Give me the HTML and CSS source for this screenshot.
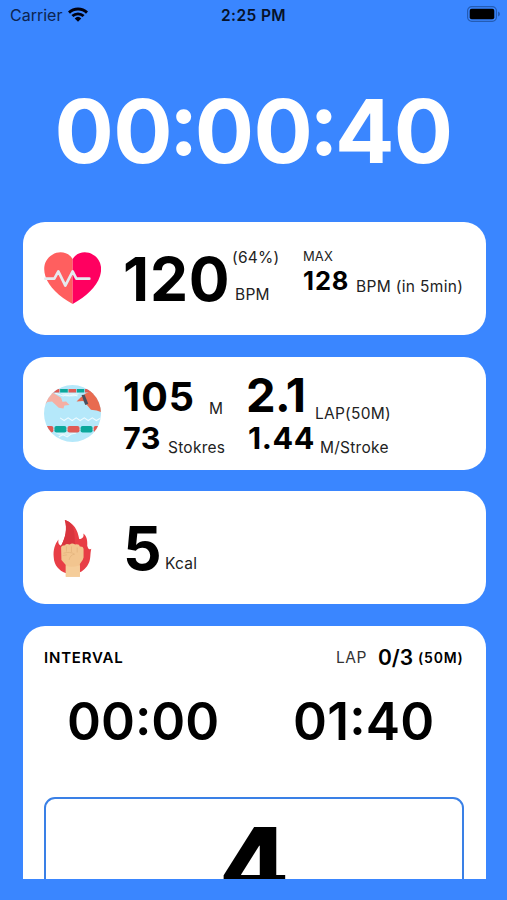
FILE: index.html
```html
<!DOCTYPE html>
<html lang="en">
<head>
<meta charset="utf-8">
<title>Workout</title>
<link rel="stylesheet" href="styles.css">
</head>
<body>
<header class="status">
  <div class="carrier">Carrier
    <svg class="wifi" viewBox="0 0 20 15"><path d="M0 4.6A14.3 14.3 0 0 1 20 4.6L18 6.7A11.4 11.4 0 0 0 2 6.7ZM3.4 8.1A9.6 9.6 0 0 1 16.6 8.1L14.6 10.1A6.7 6.7 0 0 0 5.4 10.1ZM6.7 11.4A4.8 4.8 0 0 1 13.3 11.4L10 14.8Z"/></svg>
  </div>
  <div class="clock">2:25 PM</div>
  <svg class="battery" viewBox="0 0 33 16"><rect x=".6" y=".6" width="28.8" height="14.8" rx="4.2" fill="none" stroke="#245cb4" stroke-width="1.2"/><rect x="2.7" y="2.7" width="24.6" height="10.6" rx="2"/><path d="M31 5.5Q33 6.2 33 8T31 10.5Z" fill="#245cb4"/></svg>
</header>
<h1 class="timer">00<i>:</i>00<i>:</i>40</h1>
<main class="cards">
  <section class="card heart">
    <svg class="icon" viewBox="87 105 171 171">
      <path d="M173 132C161 112 134 106 112 119C89 132 83 158 91 183C102 217 132 244 173 267Z" fill="#ff5f5f"/>
      <path d="M173 132C185 112 212 106 234 119C257 132 263 158 255 183C244 217 214 244 173 267Z" fill="#ff0060"/>
      <path d="M91 191H118L130 169L151 212L173 169L184 191H223" fill="none" stroke="#e6eaee" stroke-width="8" stroke-linecap="round" stroke-linejoin="round"/>
    </svg>
    <div class="rate">120</div>
    <div class="rate-side"><span class="small">(64%)</span><span class="small unit">BPM</span></div>
    <div class="max">
      <span class="max-label">MAX</span>
      <div class="max-row"><b>128</b><span class="small">BPM (in 5min)</span></div>
    </div>
  </section>
  <section class="card swim">
    <svg class="icon" viewBox="88 104 170 170">
      <defs><clipPath id="pool"><circle cx="173" cy="189" r="85"/></clipPath></defs>
      <g clip-path="url(#pool)">
        <path d="M88 104H258V274H88Z" fill="#b5e8fa"/>
        <path d="M137 128Q151 144 164 136Q179 144 195 128ZM118 245L140 257Q149 251 160 256Q171 245 186 245Z" fill="#d5f3fc"/>
        <path d="M121 128L145 137L153 134L164 137L176 133L188 137M136 202L148 210L160 202L172 210L184 202L196 210L208 202L220 210L232 202L244 210L258 202M132 259L144 252L157 259L170 250L184 247" fill="none" stroke="#f0fbff" stroke-width="3"/>
        <path d="M88 116H134V126H88ZM161 116H184V126H161ZM210 116H258V126H210Z" fill="#df5b55"/>
        <path d="M136 116H159V126H136ZM186 116H208V126H186Z" fill="#0ba79b"/>
        <path d="M88 158L96 139L113 126L139 142L143 154L154 153L164 164L149 165L146 174L132 172L112 153L98 155L87 168Z" fill="#f5afa3"/>
        <path d="M185 153L197 141L211 130L228 122L270 126V188L245 180L228 178L218 166L205 152Z" fill="#e86b50"/>
        <path d="M200 134L209 133L220 160L211 164Z" fill="#47505f"/>
        <path d="M88 236H258" stroke="#fff" stroke-width="3"/>
        <rect x="80" y="226" width="36" height="20" rx="6" fill="#df5b55"/>
        <rect x="119" y="226" width="36" height="20" rx="6" fill="#0ba79b"/>
        <rect x="158" y="226" width="36" height="20" rx="6" fill="#df5b55"/>
        <rect x="197" y="226" width="36" height="20" rx="6" fill="#0ba79b"/>
        <rect x="236" y="226" width="36" height="20" rx="6" fill="#df5b55"/>
      </g>
    </svg>
    <div class="swim-col distance">
      <div class="line"><b class="m105">105</b><span class="small u-m">M</span></div>
      <div class="line"><b class="mid">73</b><span class="small u-low">Stokres</span></div>
    </div>
    <div class="swim-col laps">
      <div class="line"><b class="m21">2.1</b><span class="small u-lap">LAP(50M)</span></div>
      <div class="line"><b class="mid">1.44</b><span class="small u-low">M/Stroke</span></div>
    </div>
  </section>
  <section class="card energy">
    <svg class="icon" viewBox="87 105 170 170">
      <path d="M149 105C176 113 188 136 192 162C203 161 207 153 204 145C215 151 217 169 216 182C219 191 220 195 228 191C224 207 227 216 222 230C215 247 203 258 189 263H151C132 256 117 240 116 216C114 194 119 178 130 163C128 174 132 180 138 182C151 158 157 131 149 105Z" fill="#e83e46"/>
      <path d="M149 105C176 113 180 136 179 185H133L138 182C151 158 157 131 149 105Z" fill="#d9353e"/>
      <path d="M138 187Q139 180 150 180Q151 175 164 178Q170 172 180 178Q193 176 194 184Q204 183 205 191V217Q204 225 194 236V274H152V239L139 224Z" fill="#f2c58f"/>
      <path d="M152 240Q166 249 194 240V274H152Z" fill="#f5cd9a"/>
      <path d="M154 184V199M169 184V201M186 187V202M145 204Q166 198 178 207Q165 209 162 224M143 211L156 209" fill="none" stroke="#e2b27c" stroke-width="2.2"/>
    </svg>
    <div class="rate five">5</div>
    <span class="small kcal">Kcal</span>
  </section>
  <section class="card interval">
    <div class="int-head">
      <span class="int-title">INTERVAL</span>
      <span class="int-lap">LAP</span>
      <span class="int-count">0/3</span>
      <span class="int-len">(50M)</span>
    </div>
    <div class="int-times"><span class="t1">00:00</span><span class="t2">01<i>:</i>40</span></div>
    <div class="set"><span>4</span></div>
  </section>
</main>
</body>
</html>
```
FILE: styles.css
```css
* { box-sizing: border-box; }
body {
  margin: 0;
  height: 900px;
  overflow: hidden;
  background: #3a86ff;
  color: #000;
  font-family: Inter, "Liberation Sans", sans-serif;
  line-height: 1;
  white-space: nowrap;
}
b { font-weight: 700; }
.status {
  display: grid;
  grid-template-columns: 1fr auto 1fr;
  height: 30px;
  padding: 6px 7px 0 10px;
  align-items: start;
}
.carrier { display: flex; gap: 6px; font-size: 16px; line-height: 18px; color: #0c2450; }
.wifi { width: 20px; height: 15px; margin-top: 1px; fill: #001; }
.clock { margin-right: 3px; font-size: 15.5px; line-height: 19px; font-weight: 600; color: #06122a; letter-spacing: .4px; }
.battery { width: 33px; height: 16px; justify-self: end; }
.timer {
  margin: 57px 0 0;
  height: 135px;
  font-size: 88px;
  font-weight: 700;
  letter-spacing: -.6px;
  text-align: center;
  color: #fff;
}
.timer i, .t2 i { font-style: normal; line-height: 0; }
.timer i { margin: 0 -3px; vertical-align: 8.5px; }
.t2 i { vertical-align: 5px; }
.cards {
  display: flex;
  flex-direction: column;
  gap: 21.7px;
  height: 656.5px;
  padding: 0 21.5px 0 22.5px;
  overflow: hidden;
}
.card {
  flex: none;
  display: flex;
  align-items: flex-start;
  height: 113px;
  padding-left: 21.5px;
  border-radius: 22px;
  background: #fff;
}
.icon { flex: none; width: 57px; height: 57px; margin-top: 28.3px; }
.small { font-size: 15.5px; color: #222; letter-spacing: .25px; }
.rate { width: 109px; margin: 27px 0 0 22px; font-size: 60.5px; font-weight: 700; letter-spacing: .8px; }
.rate-side { display: flex; flex-direction: column; width: 71px; padding-top: 28px; }
.rate-side .unit { margin: 21px 0 0 3px; }
.max { display: flex; flex-direction: column; padding-top: 28px; }
.max-label { font-size: 13px; letter-spacing: .1px; color: #222; }
.max-row { display: flex; }
.max-row b { width: 53px; margin-top: 5px; font-size: 25.5px; letter-spacing: .9px; }
.max-row .small { margin-top: 16px; letter-spacing: .33px; }
.swim-col { padding-top: 20px; }
.distance { width: 123px; margin-left: 22px; }
.line { display: flex; height: 47px; }
.line + .line { height: 40px; }
.m105 { width: 86px; margin-top: 1px; font-size: 39.5px; letter-spacing: 1.1px; }
.m21 { width: 69px; margin-top: -6px; font-size: 47px; letter-spacing: -.7px; }
.mid { margin-top: -1px; font-size: 30.5px; letter-spacing: .6px; }
.distance .mid { width: 45px; }
.laps .mid { width: 72px; margin-left: 2px; }
.u-m { margin-top: 24px; }
.u-lap { margin-top: 29px; }
.u-low { margin-top: 16px; }
.five { width: 42px; }
.kcal { margin-top: 65px; }
.interval { display: block; height: 300px; padding: 0 21.5px; border-radius: 22px 22px 0 0; }
.int-head { display: flex; align-items: flex-start; height: 67px; padding-top: 21px; }
.int-title { width: 292px; margin-top: 3px; font-size: 15px; font-weight: 600; letter-spacing: .8px; }
.int-lap { width: 42px; margin-top: 3px; font-size: 15.5px; color: #333; letter-spacing: .5px; }
.int-count { width: 40px; font-size: 21px; font-weight: 600; }
.int-len { margin-top: 4px; font-size: 14px; font-weight: 600; letter-spacing: .8px; }
.int-times { display: flex; height: 104px; padding-left: 23px; font-size: 51.5px; font-weight: 600; }
.t1 { width: 226px; padding-top: 3px; }
.t2 { padding-top: 3px; letter-spacing: .2px; }
.set {
  height: 180px;
  padding-top: 14px;
  border: 2px solid #3a80e6;
  border-radius: 11px;
  font-size: 102px;
  font-weight: 800;
  text-align: center;
}
```
